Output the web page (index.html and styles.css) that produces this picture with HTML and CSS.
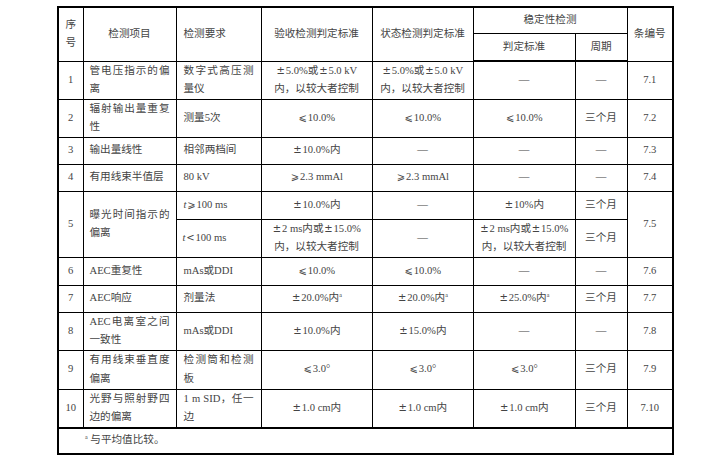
FILE: index.html
```html
<!DOCTYPE html>
<html lang="zh-CN">
<head>
<meta charset="utf-8">
<title>检测项目与技术要求</title>
<link rel="stylesheet" href="styles.css">
</head>
<body>
<table class="spec">
  <colgroup>
    <col class="c-no"><col class="c-item"><col class="c-req"><col class="c-acc"><col class="c-state"><col class="c-std"><col class="c-period"><col class="c-clause">
  </colgroup>
  <thead>
    <tr class="h-a">
      <th rowspan="2">序<br>号</th>
      <th rowspan="2">检测项目</th>
      <th rowspan="2" class="left">检测要求</th>
      <th rowspan="2">验收检测判定标准</th>
      <th rowspan="2">状态检测判定标准</th>
      <th colspan="2">稳定性检测</th>
      <th rowspan="2">条编号</th>
    </tr>
    <tr class="h-b">
      <th>判定标准</th>
      <th>周期</th>
    </tr>
  </thead>
  <tbody>
    <tr class="r-2l">
      <td>1</td>
      <td class="just">管电压指示的偏离</td>
      <td class="just">数字式高压测量仪</td>
      <td><span class="fw">±</span>5.0%或<span class="fw">±</span>5.0 kV<br>内，以较大者控制</td>
      <td><span class="fw">±</span>5.0%或<span class="fw">±</span>5.0 kV<br>内，以较大者控制</td>
      <td>—</td>
      <td>—</td>
      <td>7.1</td>
    </tr>
    <tr class="r-2l">
      <td>2</td>
      <td class="just">辐射输出量重复性</td>
      <td class="just">测量5次</td>
      <td><span class="fw">⩽</span>10.0%</td>
      <td><span class="fw">⩽</span>10.0%</td>
      <td><span class="fw">⩽</span>10.0%</td>
      <td>三个月</td>
      <td>7.2</td>
    </tr>
    <tr class="r-1l">
      <td>3</td>
      <td class="just">输出量线性</td>
      <td class="just">相邻两档间</td>
      <td><span class="fw">±</span>10.0%内</td>
      <td>—</td>
      <td>—</td>
      <td>—</td>
      <td>7.3</td>
    </tr>
    <tr class="r-1l">
      <td>4</td>
      <td class="just">有用线束半值层</td>
      <td class="just">80 kV</td>
      <td><span class="fw">⩾</span>2.3 mmAl</td>
      <td><span class="fw">⩾</span>2.3 mmAl</td>
      <td>—</td>
      <td>—</td>
      <td>7.4</td>
    </tr>
    <tr class="r-5a">
      <td rowspan="2">5</td>
      <td rowspan="2" class="just">曝光时间指示的偏离</td>
      <td class="just"><i>t</i><span class="fw">⩾</span>100 ms</td>
      <td><span class="fw">±</span>10.0%内</td>
      <td>—</td>
      <td><span class="fw">±</span>10%内</td>
      <td>三个月</td>
      <td rowspan="2">7.5</td>
    </tr>
    <tr class="r-2l">
      <td class="just"><i>t</i><span class="fw">&lt;</span>100 ms</td>
      <td><span class="fw">±</span>2 ms内或<span class="fw">±</span>15.0%<br>内，以较大者控制</td>
      <td>—</td>
      <td><span class="fw">±</span>2 ms内或<span class="fw">±</span>15.0%<br>内，以较大者控制</td>
      <td>三个月</td>
    </tr>
    <tr class="r-5a">
      <td>6</td>
      <td class="just">AEC重复性</td>
      <td class="just">mAs或DDI</td>
      <td><span class="fw">⩽</span>10.0%</td>
      <td><span class="fw">⩽</span>10.0%</td>
      <td>—</td>
      <td>—</td>
      <td>7.6</td>
    </tr>
    <tr class="r-1l">
      <td>7</td>
      <td class="just">AEC响应</td>
      <td class="just">剂量法</td>
      <td><span class="fw">±</span>20.0%内<sup>a</sup></td>
      <td><span class="fw">±</span>20.0%内<sup>a</sup></td>
      <td><span class="fw">±</span>25.0%内<sup>a</sup></td>
      <td>三个月</td>
      <td>7.7</td>
    </tr>
    <tr class="r-2l">
      <td>8</td>
      <td class="just">AEC电离室之间一致性</td>
      <td class="just">mAs或DDI</td>
      <td><span class="fw">±</span>10.0%内</td>
      <td><span class="fw">±</span>15.0%内</td>
      <td>—</td>
      <td>—</td>
      <td>7.8</td>
    </tr>
    <tr class="r-2lt">
      <td>9</td>
      <td class="just">有用线束垂直度偏离</td>
      <td class="just">检测筒和检测板</td>
      <td><span class="fw">⩽</span>3.0°</td>
      <td><span class="fw">⩽</span>3.0°</td>
      <td><span class="fw">⩽</span>3.0°</td>
      <td>三个月</td>
      <td>7.9</td>
    </tr>
    <tr class="r-2l last">
      <td>10</td>
      <td class="just">光野与照射野四边的偏离</td>
      <td class="just">1 m SID，任一边</td>
      <td><span class="fw">±</span>1.0 cm内</td>
      <td><span class="fw">±</span>1.0 cm内</td>
      <td><span class="fw">±</span>1.0 cm内</td>
      <td>三个月</td>
      <td>7.10</td>
    </tr>
    <tr class="r-foot">
      <td colspan="8" class="note"><sup>a</sup> 与平均值比较。</td>
    </tr>
  </tbody>
</table>
</body>
</html>
```

FILE: styles.css
```css
html, body {
  margin: 0;
  padding: 0;
  background: #ffffff;
}

body {
  font-family: "Liberation Serif", "Noto Sans CJK SC", "DejaVu Sans", serif;
  font-size: 10.6px;
  color: #444444;
}

.spec {
  margin: 6px 0 0 57px;
  width: 615px;
  table-layout: fixed;
  border-collapse: collapse;
  border: 2px solid #000000;
}

.c-no { width: 25px; }
.c-item { width: 93px; }
.c-req { width: 85px; }
.c-acc { width: 111px; }
.c-state { width: 101px; }
.c-std { width: 102px; }
.c-period { width: 52px; }
.c-clause { width: 46px; }

.spec th,
.spec td {
  border: 1px solid #000000;
  padding: 0 6px;
  line-height: 18.5px;
  text-align: center;
  vertical-align: middle;
  font-weight: normal;
}

.spec th.left {
  text-align: left;
  padding-left: 7px;
}

.spec td.just {
  text-align: justify;
  padding: 0 6px;
}

.spec td:nth-child(3).just {
  padding: 0 7px;
}

.fw {
  display: inline-block;
  width: 1em;
  text-align: center;
  font-family: "DejaVu Sans", "Liberation Serif", sans-serif;
  font-size: 10px;
}

.spec tr.h-a { height: 26px; }
.spec tr.h-b { height: 28px; }
.spec tr.h-b th { border-bottom: 2px solid #000000; }

.r-1l { height: 27px; }
.r-5a { height: 28px; }
.r-2l { height: 38px; }
.r-2lt { height: 39px; }
.r-foot { height: 26px; }

.spec tr.last td { border-bottom: 2px solid #000000; }

.spec sup {
  font-size: 6px;
  line-height: 0;
  vertical-align: 4px;
}

.spec td.note {
  text-align: left;
  padding-left: 26px;
}
```
